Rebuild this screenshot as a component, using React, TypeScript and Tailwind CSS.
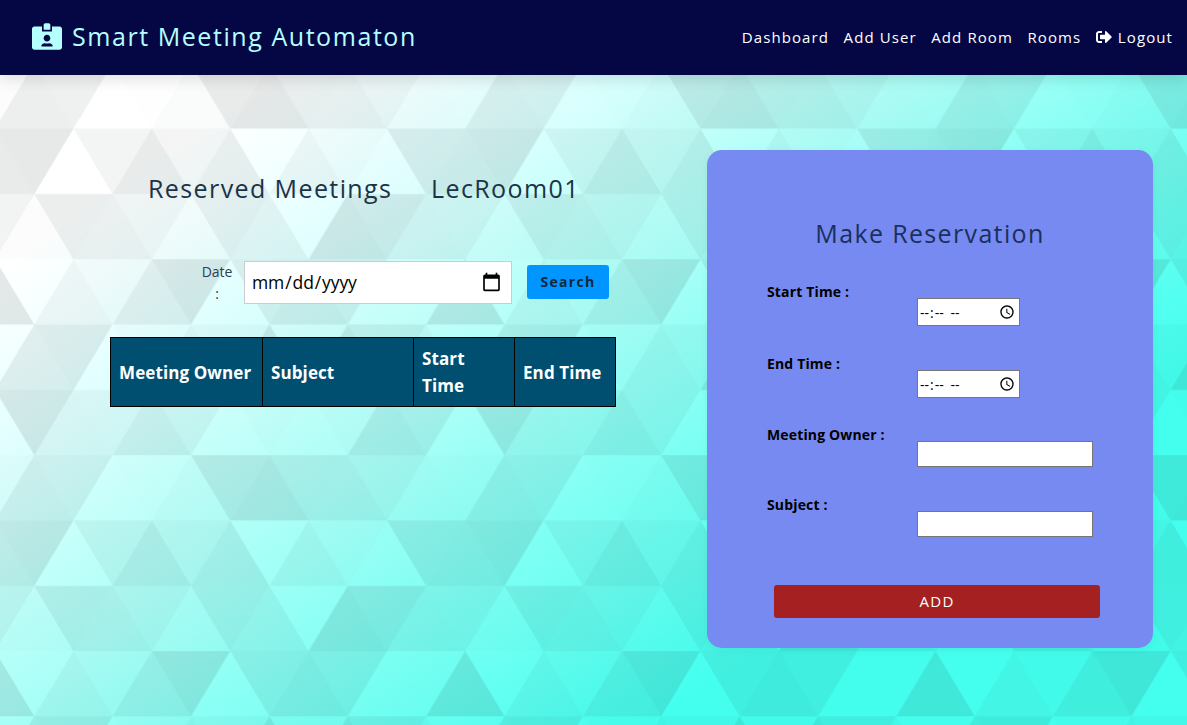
import React from "react";
import { FaIdCardAlt, FaSignOutAlt } from "react-icons/fa";

const SIDE = 78.37;
const ROW = 65.3;

// Shade of each triangle, left to right, one array per row of the repeating tile.
const SHADES: number[][] = [
  [0.075, 0.065, 0, 0.005, 0.02, 0.095, 0.105, 0.075, 0.07, 0.05, 0.015, 0.01],
  [0.1, 0, 0.05, 0.09, 0.045, 0.075, 0, 0.045, 0.015, 0.005, 0.085, 0.09],
  [0.01, 0.08, 0.065, 0.05, 0.015, 0.07, 0.055, 0, 0.11, 0.095, 0.06, 0.055],
  [0, 0.045, 0.025, 0.075, 0.105, 0, 0.07, 0.09, 0.07, 0.005, 0.005, 0.1],
  [0.075, 0.085, 0, 0.01, 0.05, 0.03, 0.11, 0.015, 0.1, 0.07, 0.03, 0],
  [0.1, 0.045, 0.04, 0.08, 0.05, 0, 0.01, 0.005, 0.015, 0.09, 0.07, 0],
];

function rowTriangles(r: number) {
  const odd = r % 2 === 1;
  const top = r * ROW;
  const bottom = top + ROW;
  const out: { points: string; shade: number }[] = [];
  for (let i = -1; i <= 12; i++) {
    const shade = SHADES[r][(i + 12) % 12];
    const x0 = (i * SIDE) / 2;
    const even = Math.abs(i) % 2 === 0;
    const pointsUp = odd ? !even : even;
    const points = pointsUp
      ? `${x0},${bottom} ${x0 + SIDE},${bottom} ${x0 + SIDE / 2},${top}`
      : `${x0},${top} ${x0 + SIDE},${top} ${x0 + SIDE / 2},${bottom}`;
    out.push({ points, shade });
  }
  return out;
}

function Backdrop() {
  return (
    <svg className="absolute inset-0 h-full w-full" width="1187" height="725" aria-hidden="true">
      <defs>
        <linearGradient id="wash" gradientUnits="userSpaceOnUse" x1="0" y1="0" x2="560" y2="828.5">
          <stop offset="0.22" stopColor="#ffffff" />
          <stop offset="0.29" stopColor="#f4ffff" />
          <stop offset="0.36" stopColor="#e4ffff" />
          <stop offset="0.43" stopColor="#d4fffd" />
          <stop offset="0.475" stopColor="#c8fffb" />
          <stop offset="0.585" stopColor="#acfff8" />
          <stop offset="0.7" stopColor="#8cfff5" />
          <stop offset="0.79" stopColor="#74fff3" />
          <stop offset="0.93" stopColor="#4cfff0" />
          <stop offset="0.97" stopColor="#44ffee" />
        </linearGradient>
        <pattern
          id="mesh"
          patternUnits="userSpaceOnUse"
          x="-4.9"
          y="63.4"
          width={SIDE * 6}
          height={ROW * 6}
        >
          {SHADES.map((_, r) =>
            rowTriangles(r).map((t, i) => (
              <polygon key={`${r}-${i}`} points={t.points} fill="#102020" fillOpacity={t.shade} />
            ))
          )}
        </pattern>
      </defs>
      <rect width="100%" height="100%" fill="url(#wash)" />
      <rect width="100%" height="100%" fill="url(#mesh)" />
    </svg>
  );
}

function Header() {
  return (
    <header className="relative flex h-[75px] items-center justify-between bg-[#050745] pr-[14px] pb-px pl-8 shadow-[0_4px_14px_rgba(0,0,0,0.12)]">
      <div className="flex items-center text-[#b5ffff]">
        <FaIdCardAlt className="mb-[2px] h-[27px] w-[30px]" />
        <span className="ml-[10px] text-[25px] tracking-[1.56px] whitespace-nowrap">Smart Meeting Automaton</span>
      </div>
      <nav className="flex items-center gap-[14.5px] text-[15px] tracking-[1.1px] whitespace-nowrap text-white">
        <a>Dashboard</a>
        <a>Add User</a>
        <a>Add Room</a>
        <a>Rooms</a>
        <a className="flex items-center gap-[6px]">
          <FaSignOutAlt className="h-4 w-4" />
          Logout
        </a>
      </nav>
    </header>
  );
}

function Meetings() {
  const th = "border border-black px-2 text-left font-bold";
  return (
    <section className="ml-[110px] w-[506px]">
      <div className="mt-[94px] flex h-10 items-center pl-[38px] text-[25px] tracking-[1.4px] whitespace-nowrap text-[#1b3347]">
        <h2 className="w-[283px]">Reserved Meetings</h2>
        <h2>LecRoom01</h2>
      </div>
      <div className="mt-[52px] flex h-[43px] items-center pl-[90px]">
        <label className="h-[43px] w-[34px] text-center text-[14px] leading-[22px] tracking-[-0.1px] text-[#2b4052]">
          Date :
        </label>
        <input
          type="date"
          className="ml-[10px] h-[43px] w-[268px] border border-[#ccc] bg-white pr-[9px] pl-[6px] text-[17.5px] tracking-[-0.1px] text-black [&::-webkit-calendar-picker-indicator]:h-[21px] [&::-webkit-calendar-picker-indicator]:w-[21px] [&::-webkit-calendar-picker-indicator]:bg-contain [&::-webkit-calendar-picker-indicator]:p-0"
        />
        <button className="mb-[2px] ml-[15px] h-[34px] w-[82px] rounded-[3px] bg-[#0095ff] text-[14px] font-bold tracking-[1.3px] text-[#10283c]">
          Search
        </button>
      </div>
      <table className="mt-[33px] h-[70px] w-[506px] table-fixed border-collapse bg-[#004f71] text-[17px] leading-[27px] tracking-[0.1px] text-white">
        <thead>
          <tr>
            <th className={`${th} w-[152px]`}>Meeting Owner</th>
            <th className={`${th} w-[151px]`}>Subject</th>
            <th className={`${th} w-[101px]`}>Start Time</th>
            <th className={`${th} w-[101px]`}>End Time</th>
          </tr>
        </thead>
      </table>
    </section>
  );
}

function Field({ label, time, className }: { label: string; time?: boolean; className: string }) {
  return (
    <div className={`flex ${className}`}>
      <label className="w-[150px] text-[14px] leading-5 font-bold tracking-[0.15px] whitespace-nowrap text-black">
        {label}
      </label>
      {time ? (
        <input
          type="time"
          className="mt-4 h-7 w-[103px] border border-[#767676] bg-white px-[1px] text-[14px] text-black [&::-webkit-calendar-picker-indicator]:mr-[3px] [&::-webkit-calendar-picker-indicator]:h-4 [&::-webkit-calendar-picker-indicator]:w-4 [&::-webkit-calendar-picker-indicator]:bg-contain [&::-webkit-calendar-picker-indicator]:p-0 [&::-webkit-datetime-edit-ampm-field]:ml-[3px] [&::-webkit-datetime-edit-minute-field]:tracking-[0.6px] [&::-webkit-datetime-edit-hour-field]:tracking-[0.6px] [&::-webkit-datetime-edit-ampm-field]:tracking-[0.6px]"
        />
      ) : (
        <input type="text" className="mt-4 h-[26px] w-[176px] border border-[#767676] bg-white px-[2px] text-[14px]" />
      )}
    </div>
  );
}

function Reservation() {
  return (
    <section className="mt-[75px] mr-[34px] h-[498px] w-[446px] rounded-[15px] bg-[#778af1] px-[60px] shadow-[0_2px_8px_rgba(0,0,0,0.05)]">
      <h2 className="mt-[63px] h-10 text-center text-[25px] leading-10 tracking-[1.35px] whitespace-nowrap text-[#1b2f5c]">
        Make Reservation
      </h2>
      <Field label="Start Time :" time className="mt-[29px] h-[72px]" />
      <Field label="End Time :" time className="h-[71px]" />
      <Field label="Meeting Owner :" className="h-[70px]" />
      <Field label="Subject :" className="h-[90px]" />
      <button className="ml-[7px] block h-[33px] w-[326px] rounded-[3px] bg-[#a52121] text-[15px] tracking-[1.3px] text-white">
        ADD
      </button>
    </section>
  );
}

export default function App() {
  return (
    <div className="relative h-[725px] w-full overflow-hidden bg-[#b2fff9] font-['Open_Sans','Noto_Sans',sans-serif]">
      <Backdrop />
      <div className="relative">
        <Header />
        <main className="flex items-start justify-between">
          <Meetings />
          <Reservation />
        </main>
      </div>
    </div>
  );
}
